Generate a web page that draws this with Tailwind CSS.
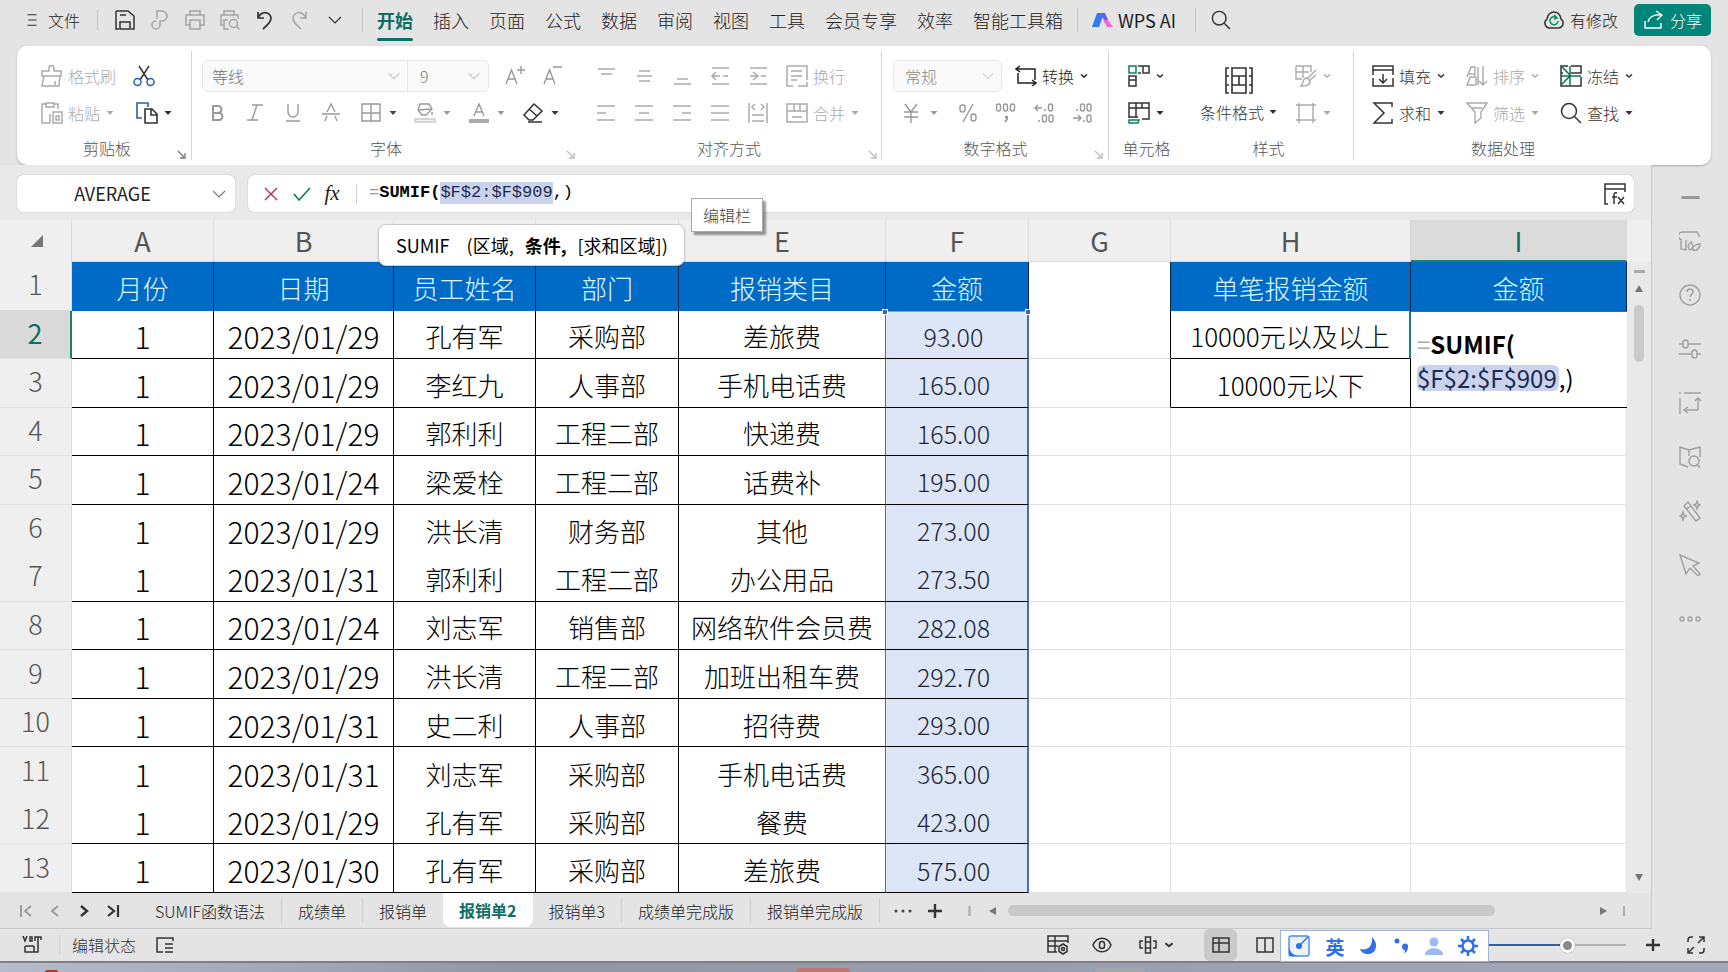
<!DOCTYPE html>
<html lang="zh-CN">
<head>
<meta charset="utf-8">
<title>报销单2</title>
<script src="https://cdn.jsdelivr.net/npm/@tailwindcss/browser@4"></script>
</head>
<body class="flex h-screen flex-col overflow-hidden bg-[#e4e4e4] font-['Noto_Sans_CJK_SC',sans-serif] font-light text-[#222]">

<svg class="hidden" fill="none">
  <defs>
    <symbol id="caret" viewBox="0 0 10 10"><path d="M1.5 3 5 7 8.500 3z" fill="currentColor"/></symbol>
    <symbol id="carets" viewBox="0 0 10 10"><path d="M2 3.500 5 6 8 3.500" stroke="currentColor" stroke-width="1.600" fill="none"/></symbol>
    <symbol id="chev" viewBox="0 0 14 14"><path d="m1 4 6 6 6-6" stroke="currentColor" stroke-width="1.200" fill="none"/></symbol>
    <symbol id="corner" viewBox="0 0 10 10"><path d="m1 1 6 6M8 3v5H3" stroke="currentColor" stroke-width="1.300" fill="none"/></symbol>
    <symbol id="search" viewBox="0 0 22 22"><circle cx="9" cy="9" r="7.500"/><path d="m14.500 14.500 6.500 6.500"/></symbol>
  </defs>
</svg>

<header class="flex h-[46px] shrink-0 items-center pr-[17px] pb-[6px] pl-[26px]">
  <button class="flex items-center gap-[10px] text-[16px]" type="button">
    <svg class="size-3 overflow-visible" viewBox="0 0 12 16" fill="none" stroke="#333" stroke-width="1.500"><path d="M0 1h12M1 8h11M0 15h12"/></svg>文件</button>
  <span class="mx-[17px] h-5 w-px bg-[#c4c4c4]"></span>
  <div class="flex items-center gap-[15px] text-[#a4a4a4]">
    <button type="button" aria-label="保存"><svg class="size-5" viewBox="0 0 20 20" fill="none" stroke="#333" stroke-width="1.500"><path d="M1 1h12l6 5v13h-3M1 1v18h3M5 19v-7h10v7zM5 5h6"/></svg></button>
    <button type="button" aria-label="输出"><svg class="size-5" viewBox="0 0 20 20" fill="none" stroke="currentColor" stroke-width="1.500"><path d="M7 9V1h5a5 5 0 0 1 0 10h-2v4a4 4 0 1 1-4-4"/></svg></button>
    <button type="button" aria-label="打印"><svg class="size-5" viewBox="0 0 20 20" fill="none" stroke="currentColor" stroke-width="1.500"><path d="M5 5V1h10v4M5 15H1V5h18v10h-4M5 10h10v9H5z"/></svg></button>
    <button type="button" aria-label="打印预览"><svg class="size-5" viewBox="0 0 20 20" fill="none" stroke="currentColor" stroke-width="1.500"><path d="M4 5V1h10v4M3 15H1V5h17v4M8 10H4v9h5"/><circle cx="13.500" cy="13.500" r="4"/><path d="m16.500 16.500 3 3"/></svg></button>
    <button type="button" aria-label="撤销"><svg class="size-5" viewBox="0 0 20 20" fill="none" stroke="#333" stroke-width="1.700"><path d="M3 2v6h6M3 8c2-5 7-7 11-4 4 4 2 8-6 15"/></svg></button>
    <button type="button" aria-label="恢复"><svg class="size-5" viewBox="0 0 20 20" fill="none" stroke="currentColor" stroke-width="1.500"><path d="M16 2v6h-6M16 8C14 3 9 1 5 4c-4 4-2 8 6 15"/></svg></button>
    <button type="button" aria-label="更多" class="flex w-5 justify-center text-[#333]"><svg class="size-[14px]"><use href="#chev"/></svg></button>
  </div>
  <span class="mr-[14px] ml-[17px] h-6 w-px bg-[#c4c4c4]"></span>
  <nav class="flex items-center gap-5 text-[18px] leading-[30px] whitespace-nowrap">
    <a href="#" class="relative font-bold text-[#0d6e64] after:absolute after:inset-x-0 after:top-[33px] after:h-[3px] after:rounded-full after:bg-[#0d6e64]">开始</a>
    <a href="#">插入</a><a href="#">页面</a><a href="#">公式</a><a href="#">数据</a><a href="#">审阅</a><a href="#">视图</a><a href="#">工具</a><a href="#">会员专享</a><a href="#">效率</a><a href="#">智能工具箱</a>
  </nav>
  <span class="mx-[14px] h-6 w-px bg-[#c4c4c4]"></span>
  <button type="button" class="flex items-center gap-[5px] text-[18px] font-normal whitespace-nowrap">
    <svg class="h-4 w-[21px]" viewBox="0 0 21 16"><path d="M5 1h7L7 15H0z" fill="#3478f6"/><path d="M8 1h5l3 7-3 1-3-4z" fill="#7358ee"/><path d="M11 8h5l5 7h-6z" fill="#ec6ecb"/></svg>WPS AI</button>
  <span class="mr-[15px] ml-[19px] h-6 w-px bg-[#c4c4c4]"></span>
  <button type="button" aria-label="搜索"><svg class="size-5" fill="none" stroke="#333" stroke-width="1.600"><use href="#search"/></svg></button>
  <div class="ml-auto flex items-center gap-4 text-[16px] whitespace-nowrap">
    <button type="button" class="flex items-center gap-[5px]"><svg class="h-5 w-[22px]" viewBox="0 0 22 20" fill="none" stroke="#333" stroke-width="1.500"><path d="M6 18a5 5 0 0 1-2-9C5 4 8 2 11 2s6 2 7 7a5 5 0 0 1-2 9z"/><path d="M14 8a4 4 0 1 0 1 3M11 5l3 3-3 1" stroke="#0f8a6a"/></svg>有修改</button>
    <button type="button" class="flex h-8 items-center gap-[6px] rounded-[5px] bg-[#00857a] px-[9px] text-white"><svg class="h-5 w-[21px]" viewBox="0 0 21 20" fill="none" stroke="#fff" stroke-width="1.400"><path d="m13 1 6 4-5 5M19 5C11 4 6 7 5 12M2 11v7h16v-5"/></svg>分享</button>
  </div>
</header>

<section class="mx-[17px] flex h-[119px] shrink-0 rounded-[10px] bg-white text-[16px] text-[#333] shadow-[0_1px_2px_#0004] [&_svg]:shrink-0" aria-label="功能区">
  <!-- clipboard -->
  <div class="relative flex w-[174px] shrink-0 flex-col pt-[11px] pl-6">
    <div class="flex h-[37px] items-center gap-[17px]">
      <button type="button" class="flex items-center gap-[5px] text-[#aaa]"><svg class="size-[22px]" viewBox="0 0 22 22" fill="none" stroke="currentColor" stroke-width="1.500"><path d="M8 5V3a2 2 0 0 1 5 0v3h7v5H1V6h7zM3 11 1 21h17l1-10M14 21v-5"/></svg>格式刷</button>
      <button type="button" aria-label="剪切"><svg class="size-[22px]" viewBox="0 0 22 22" fill="none" stroke="#333" stroke-width="1.500"><path d="M6 1 15 15M16 1 7 15"/><g stroke="#2c5fa8"><circle cx="4.500" cy="17" r="3.500"/><circle cx="17.500" cy="17" r="3.500"/></g></svg></button>
    </div>
    <div class="flex h-[37px] items-center">
      <button type="button" class="flex items-center gap-[5px] text-[#aaa]"><svg class="size-[22px]" viewBox="0 0 22 22" fill="none" stroke="currentColor" stroke-width="1.500"><path d="M5 2H1v19h8M5 1h8v4H5zM13 2h4v5M12 10h9v11h-9zM15 14h3v4h-3zM9 12v9"/></svg>粘贴<svg class="size-[10px]"><use href="#caret"/></svg></button>
      <button type="button" class="ml-[21px] flex items-center gap-[5px]" aria-label="复制"><svg class="size-[22px]" viewBox="0 0 22 22" fill="none" stroke="#333" stroke-width="1.600"><path d="M6 16H1V1h11v4" stroke="#2c5fa8"/><path d="M9 7h7l5 5v9H9zM15 7v6h6"/></svg><svg class="size-[10px]"><use href="#caret"/></svg></button>
    </div>
    <p class="flex h-[34px] w-[132px] items-center justify-center text-[#555]">剪贴板</p>
    <svg class="absolute right-[4px] bottom-[5px] size-[10px] text-[#777]"><use href="#corner"/></svg>
  </div>
  <span class="my-[5px] w-px shrink-0 bg-[#d4d4d4]"></span>
  <!-- font -->
  <div class="relative flex w-[384px] shrink-0 flex-col pt-[11px] pl-[10px] text-[#999]">
    <div class="flex h-[37px] items-center">
      <div class="flex h-8 w-[287px] items-center rounded-md border border-[#e8e8e8] bg-[#fafafa] text-[#777]">
        <button type="button" class="flex h-full w-[204px] items-center justify-between pr-[7px] pl-[9px]" aria-label="字体">等线<svg class="size-3 text-[#bbb]" viewBox="0 0 14 14"><use href="#chev"/></svg></button>
        <button type="button" class="flex h-full flex-1 items-center justify-between border-l border-[#e8e8e8] pr-[8px] pl-[12px]" aria-label="字号">9<svg class="size-3 text-[#bbb]" viewBox="0 0 14 14"><use href="#chev"/></svg></button>
      </div>
      <button type="button" class="ml-[15px] w-[22px]" aria-label="增大字号"><svg class="size-[22px]" viewBox="0 0 22 22" fill="none" stroke="currentColor" stroke-width="1.400"><path d="M2 19 7.500 5 13 19M4 14h7M17 1v8M13 5h8"/></svg></button>
      <button type="button" class="ml-[15px] w-[22px]" aria-label="减小字号"><svg class="size-[22px]" viewBox="0 0 22 22" fill="none" stroke="currentColor" stroke-width="1.400"><path d="M3 19 8.500 5 14 19M5 14h7M12 2h9"/></svg></button>
    </div>
    <div class="flex h-[37px] items-center pl-1">
      <button type="button" class="mr-[16px]" aria-label="加粗"><svg class="size-[22px]" viewBox="0 0 22 22" fill="none" stroke="currentColor" stroke-width="2"><path d="M7 4h5a3 3 0 0 1 0 7H7zM7 11h6a3 3 0 0 1 0 7H7z"/></svg></button>
      <button type="button" class="mr-[16px]" aria-label="倾斜"><svg class="size-[22px]" viewBox="0 0 22 22" fill="none" stroke="currentColor" stroke-width="1.400"><path d="M8 3h11M3 18h11M13 3 8 18"/></svg></button>
      <button type="button" class="mr-[16px]" aria-label="下划线"><svg class="size-[22px]" viewBox="0 0 22 22" fill="none" stroke="currentColor" stroke-width="1.400"><path d="M6 2v8a5 5 0 0 0 10 0V2M4 19h14"/></svg></button>
      <button type="button" class="mr-[18px]" aria-label="删除线"><svg class="size-[22px]" viewBox="0 0 22 22" fill="none" stroke="currentColor" stroke-width="1.400"><path d="M7 10 11 2l4 8M5 19l2-5M17 19l-2-5M2 12h18"/></svg></button>
      <button type="button" class="mr-[16px] flex items-center gap-[6px]" aria-label="边框"><svg class="size-[22px]" viewBox="0 0 22 22" fill="none" stroke="currentColor" stroke-width="1.400"><path d="M2 2h18v17H2zM11 2v17M2 11h18"/></svg><svg class="size-[10px] text-[#444]"><use href="#caret"/></svg></button>
      <button type="button" class="mr-[16px] flex items-center gap-[6px]" aria-label="填充颜色"><svg class="size-[22px]" viewBox="0 0 22 22" fill="none" stroke="currentColor" stroke-width="1.400"><path d="M6 2h9l3 5-6 6H8L4 8zM4 8l13-1M18 10v3"/><path d="M1 17h20v3H1z" stroke="#ccc" fill="#f2f2f2"/></svg><svg class="size-[10px]"><use href="#caret"/></svg></button>
      <button type="button" class="mr-[16px] flex items-center gap-[6px]" aria-label="字体颜色"><svg class="size-[22px]" viewBox="0 0 22 22" fill="none" stroke="currentColor" stroke-width="1.400"><path d="M6 14 11 2l5 12M8 10h6"/><path d="M1 17h20v4H1z" fill="#aaa" stroke="none"/></svg><svg class="size-[10px]"><use href="#caret"/></svg></button>
      <button type="button" class="flex items-center gap-[6px] text-[#333]" aria-label="清除"><svg class="size-[22px]" viewBox="0 0 22 22" fill="none" stroke="currentColor" stroke-width="1.500"><path d="m12 2 8 7-9 9H7l-5-5zM7 7l8 7M6 20h14"/></svg><svg class="size-[10px]"><use href="#caret"/></svg></button>
    </div>
    <p class="mr-[6px] flex h-[34px] items-center justify-center text-[#555]">字体</p>
    <svg class="absolute right-0 bottom-[5px] size-[10px] text-[#bbb]"><use href="#corner"/></svg>
  </div>
  <!-- alignment -->
  <div class="relative flex w-[305px] shrink-0 flex-col pt-[11px] pl-[20px] text-[#aaa]">
    <div class="flex h-[37px] items-center gap-[18px]">
      <button type="button" aria-label="顶端对齐"><svg class="size-5" viewBox="0 0 20 20" fill="none" stroke="currentColor" stroke-width="1.500"><path d="M2 3h17M5 8h11"/></svg></button>
      <button type="button" aria-label="垂直居中"><svg class="size-5" viewBox="0 0 20 20" fill="none" stroke="currentColor" stroke-width="1.500"><path d="M5 5h11M3 10h15M5 15h11"/></svg></button>
      <button type="button" aria-label="底端对齐"><svg class="size-5" viewBox="0 0 20 20" fill="none" stroke="currentColor" stroke-width="1.500"><path d="M5 13h11M2 18h17"/></svg></button>
      <button type="button" aria-label="减少缩进"><svg class="size-5" viewBox="0 0 20 20" fill="none" stroke="currentColor" stroke-width="1.500"><path d="M2 2h17M2 18h17M2 10h8M13 10h5M6 6l-4 4 4 4"/></svg></button>
      <button type="button" aria-label="增加缩进"><svg class="size-5" viewBox="0 0 20 20" fill="none" stroke="currentColor" stroke-width="1.500"><path d="M2 2h17M2 18h17M2 10h7M13 10h5M5 6l5 4-5 4"/></svg></button>
      <button type="button" class="flex items-center gap-[5px]"><svg class="size-[22px]" viewBox="0 0 22 22" fill="none" stroke="currentColor" stroke-width="1.500"><path d="M1 1h20v14M1 1v20h6M5 6h11M5 11h11M5 15h6M21 17v4h-9"/></svg>换行</button>
    </div>
    <div class="flex h-[37px] items-center gap-[18px]">
      <button type="button" aria-label="左对齐"><svg class="size-5" viewBox="0 0 20 20" fill="none" stroke="currentColor" stroke-width="1.500"><path d="M1 3h18M1 10h9M1 17h18"/></svg></button>
      <button type="button" aria-label="水平居中"><svg class="size-5" viewBox="0 0 20 20" fill="none" stroke="currentColor" stroke-width="1.500"><path d="M1 3h18M5 10h10M1 17h18"/></svg></button>
      <button type="button" aria-label="右对齐"><svg class="size-5" viewBox="0 0 20 20" fill="none" stroke="currentColor" stroke-width="1.500"><path d="M1 3h18M10 10h9M1 17h18"/></svg></button>
      <button type="button" aria-label="两端对齐"><svg class="size-5" viewBox="0 0 20 20" fill="none" stroke="currentColor" stroke-width="1.500"><path d="M1 3h18M1 10h18M1 17h18"/></svg></button>
      <button type="button" aria-label="分散对齐"><svg class="size-5" viewBox="0 0 20 20" fill="none" stroke="currentColor" stroke-width="1.500"><path d="M1 0v20M19 0v20M7 1 4 4l3 3M13 1l3 3-3 3M4 12h12M4 18h12"/></svg></button>
      <button type="button" class="flex items-center gap-[5px]"><svg class="size-[22px]" viewBox="0 0 22 22" fill="none" stroke="currentColor" stroke-width="1.500"><path d="M1 2h20v18H1zM1 9h20M8 2v7M14 2v7M6 15h10"/></svg>合并<svg class="size-[10px]"><use href="#caret"/></svg></button>
    </div>
    <p class="flex h-[34px] w-[266px] items-center justify-center text-[#555]">对齐方式</p>
    <svg class="absolute right-[3px] bottom-[5px] size-[10px] text-[#bbb]"><use href="#corner"/></svg>
  </div>
  <span class="my-[5px] w-px shrink-0 bg-[#d4d4d4]"></span>
  <!-- number -->
  <div class="relative flex w-[226px] shrink-0 flex-col pt-[11px] pl-[11px] text-[#999]">
    <div class="flex h-[37px] items-center">
      <button type="button" class="flex h-8 w-[109px] items-center justify-between rounded-md border border-[#e8e8e8] bg-[#fafafa] pr-[7px] pl-[11px] text-[#888]">常规<svg class="size-3 text-[#ccc]" viewBox="0 0 14 14"><use href="#chev"/></svg></button>
      <button type="button" class="ml-[13px] flex items-center gap-[5px] text-[#222]"><svg class="size-[22px]" viewBox="0 0 22 22" fill="none" stroke="currentColor" stroke-width="1.500"><path d="M5 1 1 4l4 3M1 4h19v11M17 15l4 3-4 3M21 18H3V8"/></svg>转换<svg class="size-[10px]"><use href="#carets"/></svg></button>
    </div>
    <div class="flex h-[37px] items-center">
      <button type="button" class="flex w-[53px] items-center gap-[8px] pl-[8px]" aria-label="货币"><svg class="size-5" viewBox="0 0 20 20" fill="none" stroke="currentColor" stroke-width="1.400"><path d="m4 1 6 8 6-8M10 9v11M3 9h14M3 14h14"/></svg><svg class="size-[10px]"><use href="#caret"/></svg></button>
      <button type="button" class="ml-[11px]" aria-label="百分比"><svg class="size-[22px]" viewBox="0 0 22 22" fill="none" stroke="currentColor" stroke-width="1.400"><path d="M16 2 6 20"/><rect x="3" y="3" width="5" height="7" rx="2.500"/><rect x="14" y="12" width="5" height="7" rx="2.500"/></svg></button>
      <button type="button" class="ml-[16px]" aria-label="千位分隔"><svg class="size-[22px]" viewBox="0 0 22 22" fill="none" stroke="currentColor" stroke-width="1.400"><rect x="1.500" y="2" width="4" height="7" rx="2"/><rect x="8.500" y="2" width="4" height="7" rx="2"/><rect x="15.500" y="2" width="4" height="7" rx="2"/><path d="M10 15h2v2l-2 3" stroke-width="2"/></svg></button>
      <button type="button" class="ml-[16px]" aria-label="增加小数位"><svg class="size-[22px]" viewBox="0 0 22 22" fill="none" stroke="currentColor" stroke-width="1.400"><path d="M9 6H2M5 3 2 6l3 3M11 8h2M5 19h2"/><rect x="15.500" y="2" width="4" height="7" rx="2"/><rect x="9.500" y="13" width="4" height="7" rx="2"/><rect x="16" y="13" width="4" height="7" rx="2"/></svg></button>
      <button type="button" class="ml-[16px]" aria-label="减少小数位"><svg class="size-[22px]" viewBox="0 0 22 22" fill="none" stroke="currentColor" stroke-width="1.400"><path d="M2 16h8M7 13l3 3-3 3M12 19h2M5 8h2"/><rect x="9.500" y="2" width="4" height="7" rx="2"/><rect x="16" y="2" width="4" height="7" rx="2"/><rect x="16" y="13" width="4" height="7" rx="2"/></svg></button>
    </div>
    <p class="mr-[10px] flex h-[34px] items-center justify-center text-[#555]">数字格式</p>
    <svg class="absolute right-[4px] bottom-[5px] size-[10px] text-[#bbb]"><use href="#corner"/></svg>
  </div>
  <span class="my-[5px] w-px shrink-0 bg-[#d4d4d4]"></span>
  <!-- cells -->
  <div class="flex w-[75px] shrink-0 flex-col items-center pt-[11px]">
    <div class="flex h-[37px] items-center"><button type="button" class="flex items-center gap-[5px]" aria-label="行和列"><svg class="size-[22px]" viewBox="0 0 22 22" fill="none" stroke="currentColor" stroke-width="1.500"><path d="M1 1h7v7H1z" stroke="#0a8066"/><path d="M10 1h11v7h-6V1M1 21V11h7v10zM1 15h7M10 8h3"/></svg><svg class="size-[10px]"><use href="#carets"/></svg></button></div>
    <div class="flex h-[37px] items-center"><button type="button" class="flex items-center gap-[5px]" aria-label="工作表"><svg class="size-[22px]" viewBox="0 0 22 22" fill="none" stroke="currentColor" stroke-width="1.500"><path d="M1 16V1h20v16h-7M1 6h20M8 1v15M14 1v5M1 15h9"/><path d="M1 18h10l-1 3H1z" stroke="#0a8066"/></svg><svg class="size-[10px]"><use href="#caret"/></svg></button></div>
    <p class="flex h-[34px] items-center text-[#555]">单元格</p>
  </div>
  <!-- styles -->
  <div class="flex w-[169px] shrink-0 flex-col pt-[11px]">
    <div class="flex h-[74px] pl-[16px]">
      <button type="button" class="flex flex-col items-center justify-start"><span class="flex h-[37px] items-end"><svg class="h-[27px] w-[28px]" viewBox="0 0 28 27" fill="none" stroke="currentColor" stroke-width="1.600"><path d="M4 1H1v8h3M1 9v17h3M24 1h3v8h-3M27 9v9h-3M27 18v8h-3M1 18h3M7 1h14v8H7zM7 9v9h14V9M7 18v8h14v-8M14 9v9"/></svg></span><span class="flex h-[36px] items-center gap-[4px] whitespace-nowrap">条件格式<svg class="size-[10px]"><use href="#caret"/></svg></span></button>
      <div class="ml-[17px] flex flex-col text-[#aaa]">
        <button type="button" class="flex h-[37px] items-center gap-[5px]" aria-label="表格样式"><svg class="size-[22px]" viewBox="0 0 22 22" fill="none" stroke="currentColor" stroke-width="1.400"><path d="M1 1h15v6M1 1v13h6M1 7h13M8 1v12M21 5l-8 8M21 10l-6 5M12 13c-5 0-3 5-6 8 5 0 9 0 9-5z"/></svg><svg class="size-[10px]"><use href="#carets"/></svg></button>
        <button type="button" class="flex h-[37px] items-center gap-[5px]" aria-label="单元格样式"><svg class="size-[22px]" viewBox="0 0 22 22" fill="none" stroke="currentColor" stroke-width="1.400"><path d="M1 3h20M1 18h20M4 1v20M18 1v20"/></svg><svg class="size-[10px]"><use href="#caret"/></svg></button>
      </div>
    </div>
    <p class="flex h-[34px] items-center justify-center text-[#555]">样式</p>
  </div>
  <span class="my-[5px] w-px shrink-0 bg-[#d4d4d4]"></span>
  <!-- data -->
  <div class="flex flex-1 flex-col pt-[11px] pl-[18px]">
    <div class="grid w-max grid-cols-[94px_94px_94px]">
      <button type="button" class="flex h-[37px] items-center gap-[5px]"><svg class="size-[22px]" viewBox="0 0 22 22" fill="none" stroke="currentColor" stroke-width="1.500"><path d="M1 10V1h20v9M1 5h20M5 21H1v-8M17 21h4v-8M5 21h12M11 9v9M7 14l4 4 4-4"/></svg>填充<svg class="size-[10px]"><use href="#carets"/></svg></button>
      <button type="button" class="flex h-[37px] items-center gap-[5px] text-[#aaa]"><svg class="size-[22px]" viewBox="0 0 22 22" fill="none" stroke="currentColor" stroke-width="1.400"><path d="M1 12 5 2h4v9M3 9h6M1 20h9V12H4zM17 1v19M13 16l4 4 4-4M12 2v18"/></svg>排序<svg class="size-[10px]"><use href="#carets"/></svg></button>
      <button type="button" class="flex h-[37px] items-center gap-[5px]"><svg class="size-[22px]" viewBox="0 0 22 22" fill="none" stroke="currentColor" stroke-width="1.500"><path d="M11 1h10v7H11M21 12v9H1V1h7M1 8h2"/><path d="M1 1l9 9M10 1v20M1 11h20M1 20l9-9" stroke="#0a6f5c"/></svg>冻结<svg class="size-[10px]"><use href="#carets"/></svg></button>
      <button type="button" class="flex h-[37px] items-center gap-[5px]"><svg class="size-[22px]" viewBox="0 0 22 22" fill="none" stroke="currentColor" stroke-width="1.500"><path d="M20 5V1H2l10 10L2 21h18v-4"/></svg>求和<svg class="size-[10px]"><use href="#caret"/></svg></button>
      <button type="button" class="flex h-[37px] items-center gap-[5px] text-[#aaa]"><svg class="size-[22px]" viewBox="0 0 22 22" fill="none" stroke="currentColor" stroke-width="1.400"><path d="M1 1h20l-6 9v6l-6 5V10zM6 6h10"/></svg>筛选<svg class="size-[10px]"><use href="#caret"/></svg></button>
      <button type="button" class="flex h-[37px] items-center gap-[5px]"><svg class="size-[22px]" viewBox="0 0 22 22" fill="none" stroke="currentColor" stroke-width="1.500"><use href="#search"/></svg>查找<svg class="size-[10px]"><use href="#caret"/></svg></button>
    </div>
    <p class="flex h-[34px] w-[262px] items-center justify-center text-[#555]">数据处理</p>
  </div>
</section>

<div class="flex min-h-0 flex-1">
  <main class="relative flex min-w-0 flex-1 flex-col bg-[#e9e9e9]">
    <!-- formula bar -->
    <div class="flex h-[55px] shrink-0 gap-[13px] pt-[10px] pr-[17px] pb-2 pl-[17px]">
      <div class="flex w-[218px] items-center rounded-md bg-white pr-[9px] shadow-[0_0_1px_#0006]">
        <input aria-label="名称框" value="AVERAGE" class="w-0 flex-1 pr-[4px] text-center text-[18px] font-normal outline-none">
        <svg class="size-[14px] text-[#777]"><use href="#chev"/></svg>
      </div>
      <div class="flex flex-1 items-center rounded-md bg-white pr-2 pl-[16px] shadow-[0_0_1px_#0006]">
        <button type="button" aria-label="取消"><svg class="size-[14px]" viewBox="0 0 14 14" fill="none" stroke="#b3304d" stroke-width="1.400"><path d="m1 1 12 12M13 1 1 13"/></svg></button>
        <button type="button" class="ml-[15px]" aria-label="确认"><svg class="h-[14px] w-[18px]" viewBox="0 0 18 14" fill="none" stroke="#0d7a55" stroke-width="1.600"><path d="m1 7 5 6L17 1"/></svg></button>
        <button type="button" class="ml-[11px] w-[20px] font-['Liberation_Serif',serif] text-[21px] leading-none font-normal italic" aria-label="插入函数">fx</button>
        <span class="mr-[12px] ml-[14px] h-5 w-px bg-[#ccc]"></span>
        <div role="textbox" aria-label="编辑栏" contenteditable="true" spellcheck="false" class="flex-1 pb-[2px] font-['Liberation_Mono',monospace] text-[17px] leading-[22px] font-normal whitespace-nowrap text-black outline-none"><span class="text-[#999]">=</span><span class="font-bold">SUMIF(</span><span class="inline-block bg-[#c9d3ee] text-[#1d2a4d]">$F$2:$F$909</span>,)</div>
        <button type="button" aria-label="展开编辑栏"><svg class="size-[22px]" viewBox="0 0 22 22" fill="none" stroke="#333" stroke-width="1.500"><path d="M4 21H1V1h20v8M1 6h20M13 10c-3-1-3 1-3 3v8M8 14h5M14 14l6 7M20 14l-6 7"/></svg></button>
      </div>
    </div>

    <!-- sheet -->
    <div class="flex min-h-0 flex-1">
      <div class="relative h-full min-w-0 flex-1 bg-white">
        <table class="h-full w-full table-fixed border-separate border-spacing-0 text-center">
          <colgroup><col class="w-[72px]"><col class="w-[142px]"><col class="w-[180px]"><col class="w-[142px]"><col class="w-[143px]"><col class="w-[207px]"><col class="w-[143px]"><col class="w-[142px]"><col class="w-[240px]"><col class="w-[216px]"></colgroup>
          <thead>
            <tr class="h-[42px] bg-[#efefef] text-[27px] leading-none text-[#555] [&>th]:border-r [&>th]:border-b [&>th]:border-[#d9d9d9] [&>th]:font-normal">
              <th class="border-b-0!" aria-label="全选"><svg class="ml-auto mr-[28px] size-3" viewBox="0 0 12 12"><path d="M12 0v12H0z" fill="#777"/></svg></th>
              <th>A</th><th>B</th><th aria-label="C"></th><th aria-label="D"></th><th>E</th><th>F</th><th>G</th><th>H</th>
              <th class="border-b-2! border-b-[#1b7f70]! bg-[#dbdbdb] text-[#0d6e64]">I</th>
            </tr>
          </thead>
          <tbody id="rows" class="text-[26px] leading-none text-black"></tbody>
        </table>
      </div>
      <div class="flex w-6 shrink-0 flex-col items-center border-t-[42px] border-[#efefef] pt-2 pb-3" aria-hidden="true">
        <span class="h-[3px] w-[11px] bg-[#aaa]"></span>
        <svg class="mt-[12px] h-[7px] w-2" viewBox="0 0 8 7"><path d="M4 0l4 7H0z" fill="#777"/></svg>
        <span class="mt-[13px] h-[57px] w-[10px] rounded-full bg-[#cacaca]"></span>
        <svg class="mt-auto h-[7px] w-2" viewBox="0 0 8 7"><path d="M0 0h8L4 7z" fill="#777"/></svg>
      </div>
    </div>

    <!-- sheet tabs -->
    <div class="flex h-9 shrink-0 items-center border-b border-[#c8c8c8] bg-[#e4e4e4] text-[16px] whitespace-nowrap">
      <div class="flex w-[139px] shrink-0 items-center gap-[15px] pl-[19px] text-[#999]">
        <button type="button" aria-label="第一张"><svg class="size-[14px]" viewBox="0 0 14 14" fill="none" stroke="currentColor" stroke-width="1.800"><path d="M2 1v12M12 2 6 7l6 5"/></svg></button>
        <button type="button" aria-label="上一张"><svg class="size-[14px]" viewBox="0 0 14 14" fill="none" stroke="currentColor" stroke-width="1.800"><path d="M10 2 4 7l6 5"/></svg></button>
        <button type="button" aria-label="下一张" class="text-[#333]"><svg class="size-[14px]" viewBox="0 0 14 14" fill="none" stroke="currentColor" stroke-width="2.400"><path d="m4 2 6 5-6 5"/></svg></button>
        <button type="button" aria-label="最后一张" class="text-[#333]"><svg class="size-[14px]" viewBox="0 0 14 14" fill="none" stroke="currentColor" stroke-width="2.200"><path d="m2 2 6 5-6 5M12 1v12"/></svg></button>
      </div>
      <button type="button" class="border-r border-[#ccc] px-4">SUMIF函数语法</button>
      <button type="button" class="border-r border-[#ccc] px-4">成绩单</button>
      <button type="button" class="px-4">报销单</button>
      <button type="button" class="h-[34px] self-start rounded-b-lg bg-white px-4 font-bold text-[#0d6e64]">报销单2</button>
      <button type="button" class="border-r border-[#ccc] px-4">报销单3</button>
      <button type="button" class="border-r border-[#ccc] px-4">成绩单完成版</button>
      <button type="button" class="border-r border-[#ccc] px-4">报销单完成版</button>
      <button type="button" class="ml-[14px]" aria-label="更多工作表"><svg class="h-1 w-[18px]" viewBox="0 0 18 4" fill="#444"><circle cx="2" cy="2" r="1.500"/><circle cx="9" cy="2" r="1.500"/><circle cx="16" cy="2" r="1.500"/></svg></button>
      <button type="button" class="ml-[16px]" aria-label="新建工作表"><svg class="size-[14px]" viewBox="0 0 14 14" stroke="#333" stroke-width="2.400"><path d="M7 0v14M0 7h14"/></svg></button>
      <span class="ml-[26px] h-[10px] w-[3px] bg-[#bbb]"></span>
      <svg class="ml-[18px] h-2 w-[7px]" viewBox="0 0 7 8"><path d="M7 0v8L0 4z" fill="#777"/></svg>
      <div class="mx-3 flex h-[11px] flex-1"><span class="w-[84%] rounded-full bg-[#c9c9c9]"></span></div>
      <svg class="h-2 w-[7px]" viewBox="0 0 7 8"><path d="M0 0v8l7-4z" fill="#777"/></svg>
      <span class="mr-[26px] ml-[16px] h-[10px] w-[2px] bg-[#aaa]"></span>
    </div>

    <!-- function hint -->
    <div class="absolute top-[59px] left-[378px] z-10 flex h-[42px] items-center rounded-lg border border-[#ccc] bg-white pr-[16px] pl-[17px] text-[18px] font-normal whitespace-nowrap text-black shadow-[0_1px_2px_#0003]">SUMIF<span class="ml-[17px]">(区域,</span><span class="ml-[11px] font-bold">条件,</span><span class="ml-[11px]">[求和区域])</span></div>
    <div role="tooltip" class="absolute top-[33px] left-[691px] z-10 flex h-[34px] items-center border border-[#aaa] bg-white px-[11px] text-[16px] whitespace-nowrap text-[#444] shadow-[3px_3px_2px_#0006]">编辑栏</div>
  </main>

  <aside class="flex w-[77px] shrink-0 flex-col items-center border-l border-[#c8c8c8] pt-[31px] text-[#a0a0a0]">
    <button type="button" aria-label="收起" class="flex h-[34px] items-start"><span class="block h-[3px] w-[19px] rounded-full bg-[#999]"></span></button>
    <div class="flex flex-col gap-8">
      <button type="button" aria-label="稻壳"><svg class="size-[22px]" viewBox="0 0 22 22" fill="none" stroke="currentColor" stroke-width="1.400"><path d="M3 10a4 4 0 0 1 1-8h14l3 5M2 9v10l5 1V10M11 20c-3-3-2-5 1-8 3 4 2 6-1 8zM14 20c-1-4 3-6 7-6 0 4-3 7-7 6z"/></svg></button>
      <button type="button" aria-label="帮助"><svg class="size-[22px]" viewBox="0 0 22 22" fill="none" stroke="currentColor" stroke-width="1.400"><circle cx="11" cy="11" r="10"/><path d="M8 8c0-4 6-4 6 0 0 2-3 3-3 5M11 15v2"/></svg></button>
      <button type="button" aria-label="属性"><svg class="size-[22px]" viewBox="0 0 22 22" fill="none" stroke="currentColor" stroke-width="1.400"><path d="M0 6h4M9 6h13M0 16h13M18 16h4"/><rect x="4" y="2" width="5" height="8" rx="2.500"/><rect x="13" y="12" width="5" height="8" rx="2.500"/></svg></button>
      <button type="button" aria-label="转换"><svg class="size-[22px]" viewBox="0 0 22 22" fill="none" stroke="currentColor" stroke-width="1.400"><path d="M1 0v2M1 6v16M5 1h17M19 18V6M16 9l3-3 3 3M19 18H5M9 15l-4 3 4 3"/></svg></button>
      <button type="button" aria-label="查阅"><svg class="size-[22px]" viewBox="0 0 22 22" fill="none" stroke="currentColor" stroke-width="1.400"><path d="M9 21 1 18V1l9 3 11-3v10M10 4v6"/><circle cx="15" cy="15" r="5"/><path d="m18 18 3 4"/></svg></button>
      <button type="button" aria-label="美化"><svg class="size-[22px]" viewBox="0 0 22 22" fill="none" stroke="currentColor" stroke-width="1.400"><path d="m5 6 4-4 12 16-4 3zM7 9l5-3M18 1l1 3 2 1-2 1-1 3-1-3-2-1 2-1zM4 12l1 3 2 1-2 1-1 3-1-3-2-1 2-1z"/></svg></button>
      <button type="button" aria-label="选择"><svg class="size-[22px]" viewBox="0 0 22 22" fill="none" stroke="currentColor" stroke-width="1.400"><path d="m1 1 19 8-6 3 7 8-2 2-8-8-4 6z"/></svg></button>
      <button type="button" aria-label="更多"><svg class="size-[22px]" viewBox="0 0 22 22" fill="none" stroke="currentColor" stroke-width="1.400"><circle cx="3" cy="11" r="2"/><circle cx="11" cy="11" r="2"/><circle cx="19" cy="11" r="2"/></svg></button>
    </div>
  </aside>
</div>

<footer class="relative flex h-8 shrink-0 items-center bg-[#e4e4e4] pr-[23px] pl-[22px] text-[16px] text-[#333]">
  <button type="button" aria-label="宏"><svg class="h-[18px] w-5" viewBox="0 0 20 18" fill="none" stroke="currentColor" stroke-width="1.500"><path d="M1 0l2 5 2-5M8 1h2v4H8zM13 5V1h6v3M16 1v15h-4M3 10h9M3 10v6h9v-6"/></svg></button>
  <span class="mx-[12px] ml-[17px] h-5 w-px bg-[#ccc]"></span>
  <span>编辑状态</span>
  <button type="button" class="ml-[20px]" aria-label="列表"><svg class="h-4 w-[18px]" viewBox="0 0 18 16" fill="none" stroke="currentColor" stroke-width="1.500"><path d="M17 4V1H1v14h6M9 7h8M9 11h8M9 15h8"/></svg></button>
  <div class="ml-auto flex items-center">
    <button type="button" aria-label="表格设置"><svg class="h-5 w-[22px]" viewBox="0 0 22 20" fill="none" stroke="currentColor" stroke-width="1.500"><path d="M10 17H1V1h20v7M1 6h20M1 11h10M8 1v16"/><path d="m16 9 4 2.500v5L16 19l-4-2.500v-5z"/><circle cx="16" cy="14" r="1.500"/></svg></button>
    <button type="button" class="ml-[23px]" aria-label="阅读模式"><svg class="h-4 w-5" viewBox="0 0 20 16" fill="none" stroke="currentColor" stroke-width="1.500"><path d="M1 8c4-9 14-9 18 0-4 9-14 9-18 0z"/><rect x="7.500" y="4.500" width="5" height="7" rx="2.500"/></svg></button>
    <button type="button" class="ml-[27px] flex items-center gap-[6px]" aria-label="拆分"><svg class="size-[18px]" viewBox="0 0 18 18" fill="none" stroke="currentColor" stroke-width="1.500"><path d="M4 5H1v7h3M14 5h3v7h-3M6.500 1h5v16h-5zM6 6h6M6 12h6"/></svg><svg class="size-3"><use href="#carets"/></svg></button>
    <button type="button" class="ml-[29px] flex h-8 w-[33px] items-center justify-center rounded-md bg-[#cacaca]" aria-label="普通视图"><svg class="size-[18px]" viewBox="0 0 18 16" fill="none" stroke="currentColor" stroke-width="1.500"><path d="M1 1h16v14H1zM1 6h16M7 1v14"/></svg></button>
    <button type="button" class="mr-[6px] ml-[19px]" aria-label="分页视图"><svg class="size-[18px]" viewBox="0 0 18 16" fill="none" stroke="currentColor" stroke-width="1.500"><path d="M1 1h16v14H1zM9 1v14"/></svg></button>
    <!-- input method bar -->
    <div class="z-10 mt-[2px] flex h-8 w-[209px] items-center justify-between border border-[#9fb2da] bg-white pr-[10px] pl-[7px] text-[#2f6fe8]">
      <svg class="size-[22px]" viewBox="0 0 22 22"><rect x="1" y="1" width="20" height="20" rx="2" fill="#eaf2ff" stroke="#4b8be8" stroke-width="1.400"/><path d="M1 12c1 6 5 8 9 9H1z" fill="#2f6fe8"/><circle cx="11" cy="11" r="3" fill="#2f6fe8"/><path d="m12 10 8-8" stroke="#2f6fe8" stroke-width="1.500"/></svg>
      <span class="text-[19px] leading-none font-bold">英</span>
      <svg class="size-[18px]" viewBox="0 0 18 18"><path d="M12 0c8 8 3 17-4 17-4 0-7-2-8-5 7 2 13-2 12-12z" fill="#2f6fe8"/></svg>
      <svg class="size-4" viewBox="0 0 16 16" fill="#2f6fe8"><circle cx="4" cy="3" r="2.500"/><path d="M9 8a3 3 0 0 1 6 1c0 3-2 6-4 6 1-2 1-3 1-3-2 0-3-1-3-4z"/></svg>
      <svg class="size-[18px]" viewBox="0 0 18 18" fill="#9bb9f0"><circle cx="9" cy="5" r="4.500"/><path d="M0 18c0-9 18-9 18 0z"/></svg>
      <svg class="size-5" viewBox="0 0 20 20" fill="none" stroke="#2f6fe8"><circle cx="10" cy="10" r="5.500" stroke-width="2.500"/><path d="M10 0v4M10 16v4M0 10h4M16 10h4M3 3l3 3M14 14l3 3M17 3l-3 3M6 14l-3 3" stroke-width="2.500"/></svg>
    </div>
    <input type="range" aria-label="显示比例" min="0" max="100" value="58" class="h-[2px] w-[137px] appearance-none bg-linear-to-r from-[#2f5f9f] from-58% to-[#b4b4b4] to-58% [&::-webkit-slider-thumb]:size-[15px] [&::-webkit-slider-thumb]:appearance-none [&::-webkit-slider-thumb]:rounded-full [&::-webkit-slider-thumb]:border-[3px] [&::-webkit-slider-thumb]:border-white [&::-webkit-slider-thumb]:bg-[#888] [&::-webkit-slider-thumb]:shadow-[0_0_1px_#0008]">
    <button type="button" class="ml-[20px]" aria-label="放大"><svg class="size-[14px]" viewBox="0 0 14 14" stroke="#333" stroke-width="2.400"><path d="M7 1v12M0 7h14"/></svg></button>
    <button type="button" class="ml-[27px]" aria-label="全屏"><svg class="size-[18px]" viewBox="0 0 18 18" fill="none" stroke="currentColor" stroke-width="1.500"><path d="M1 6V4q0-3 3-3h2M12 1h5v5M17 1l-6 6M17 12v2q0 3-3 3h-2M6 17H1v-5M1 17l6-6"/></svg></button>
  </div>
</footer>

<!-- desktop strip below the window -->
<div class="flex h-[11px] shrink-0 items-end overflow-hidden border-t-2 border-[#7c7f89] bg-linear-to-r from-[#b6bccb] via-[#9297a4] via-30% to-[#a3a8b8]">
  <span class="ml-[45px] h-[2px] w-[13px] rounded-t-full bg-[#a8392a]"></span>
  <span class="ml-[738px] h-1 w-[54px] rounded-t bg-[#b87a70]"></span>
  <span class="ml-[245px] h-1 w-[50px] rounded-t bg-[#a5a6ad]"></span>
</div>

<script>
const records = [
  ['1','2023/01/29','孔有军','采购部','差旅费','93.00'],
  ['1','2023/01/29','李红九','人事部','手机电话费','165.00'],
  ['1','2023/01/29','郭利利','工程二部','快递费','165.00'],
  ['1','2023/01/24','梁爱栓','工程二部','话费补','195.00'],
  ['1','2023/01/29','洪长清','财务部','其他','273.00'],
  ['1','2023/01/31','郭利利','工程二部','办公用品','273.50'],
  ['1','2023/01/24','刘志军','销售部','网络软件会员费','282.08'],
  ['1','2023/01/29','洪长清','工程二部','加班出租车费','292.70'],
  ['1','2023/01/31','史二利','人事部','招待费','293.00'],
  ['1','2023/01/31','刘志军','采购部','手机电话费','365.00'],
  ['1','2023/01/29','孔有军','采购部','餐费','423.00'],
  ['1','2023/01/30','孔有军','采购部','差旅费','575.00']
];
const head = 'border-r border-[#04264a] bg-[#006bc6] pt-1 font-light text-[#dff6ff]';
let html = `<tr class="h-12"><th scope="row" class="border-r border-b border-[#dcdcdc] bg-[#efefef] pb-1 text-[27px] font-light text-[#555]">1</th>` +
  ['月份','日期','员工姓名','部门','报销类目'].map(t => `<td class="${head}">${t}</td>`).join('') +
  `<td class="${head}">金额</td><td class="border-r border-[#04264a]"></td><td class="${head}">单笔报销金额</td><td class="${head}">金额</td></tr>`;
records.forEach((r, i) => {
  const n = i + 2;
  const open = n === 6 || n === 11;
  const line = open ? '' : 'border-b border-b-black';
  const grid = open ? '' : 'border-b border-b-[#e2e2e2]';
  const rowHead = n === 2
    ? 'border-r-2 border-r-[#1b7f70] bg-[#dadada] font-normal text-[#0d6e64]'
    : 'border-r border-r-[#dcdcdc] bg-[#efefef] font-light text-[#555]';
  html += `<tr class="h-12"><th scope="row" class="${grid} ${rowHead} pb-1 text-[27px]">${n}</th>`;
  r.forEach((t, c) => {
    if (c === 5) {
      const handles = n === 2 ? '<i class="absolute -top-[3px] -left-[4px] size-[6px] border border-white bg-[#3f66a8]"></i><i class="absolute -top-[3px] -right-[4px] size-[6px] border border-white bg-[#3f66a8]"></i>' : '';
      html += `<td class="${line} ${n === 2 ? 'border-t border-t-[#7f9fd0]' : ''} relative border-r-2 border-r-[#4a6fb0] bg-[#dce6f6] pt-1 pr-[6px] text-[25px] text-[#1b2438]">${handles}${t}</td>`;
    } else {
      const right = c === 4 ? 'border-r border-r-[#4a6fb0]' : 'border-r border-r-black';
      html += `<td class="${line} ${right} pt-1 whitespace-nowrap ${c < 2 ? 'text-[30px]' : ''}">${t}</td>`;
    }
  });
  if (n === 2) {
    html += `<td class="${grid} border-r border-r-black"></td><td class="border-r-2 border-b border-r-[#1b7f70] border-b-black pt-1">10000元以及以上</td>
      <td rowspan="2" class="border-t border-b border-t-[#1b7f70] border-b-black pt-1 pl-[6px] text-left text-[24px] leading-[34px]"><div role="textbox" aria-label="I2" contenteditable="true" spellcheck="false" class="font-normal outline-none"><span class="text-[#aaa]">=</span><span class="font-bold">SUMIF(</span><br><span class="inline-block rounded-md bg-[#c9d3ee] pr-[2px] leading-[26px] text-[#1d2a4d]">$F$2:$F$909</span>,)</div></td>`;
  } else if (n === 3) {
    html += `<td class="${grid} border-r border-r-black"></td><td class="border-r border-b border-black pt-1">10000元以下</td>`;
  } else {
    const g = `<td class="${grid} border-r border-r-[#e2e2e2]"></td>`;
    html += g + g + g;
  }
  html += '</tr>';
});
document.getElementById('rows').innerHTML = html;
</script>
</body>
</html>
